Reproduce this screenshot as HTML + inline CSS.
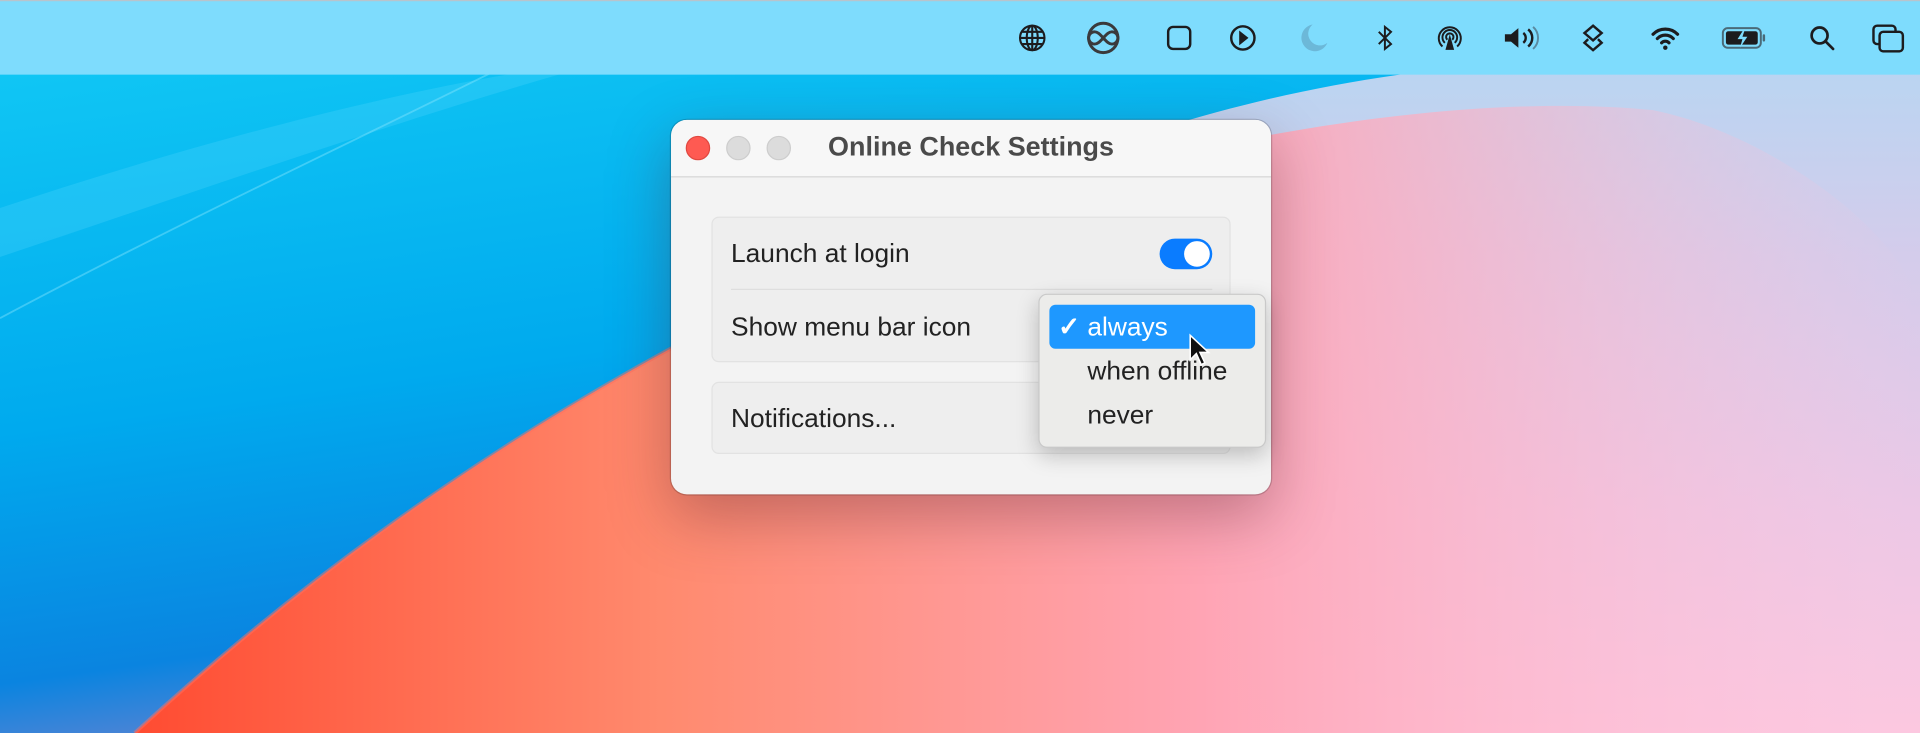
<!DOCTYPE html>
<html><head><meta charset="utf-8"><style>
html,body{margin:0;padding:0;width:1920px;height:733px;overflow:hidden;background:#fff}
#s{position:absolute;left:0;top:0;width:1568px;height:599px;transform:scale(1.22449,1.22371);transform-origin:0 0;overflow:hidden;font-family:"Liberation Sans",sans-serif}
.mb{position:absolute;left:0;top:0;width:1568px;height:60px;background:#7edcfd;border-top:1px solid #b8c4cc}
.ic{position:absolute;top:19px;width:24px;height:24px}
.win{position:absolute;left:548px;top:98px;width:490px;height:306px;border-radius:13px;background:#f3f3f3;box-shadow:0 18px 50px rgba(80,30,40,.35),0 0 0 1px rgba(0,0,0,.18);overflow:hidden}
.tb{position:absolute;left:0;top:0;width:490px;height:46px;background:#f7f7f7;border-bottom:1px solid #d6d6d6}
.tl{position:absolute;top:13px;width:18px;height:18px;border-radius:50%}
.title{position:absolute;left:0;width:490px;top:9px;text-align:center;font-weight:bold;font-size:22px;line-height:25px;color:#4a4a4a}
.grp{position:absolute;left:33px;width:422px;background:#eeeeee;border:1px solid #e2e2e2;border-radius:6px}
.lbl{position:absolute;left:15px;font-size:21.5px;line-height:25px;color:#222}
.menu{position:absolute;left:848px;top:240px;width:184px;height:124px;background:#ececea;border:1px solid #c9c9c9;border-radius:7px;box-shadow:0 6px 18px rgba(0,0,0,.22)}
.it{position:absolute;left:39px;font-size:21.5px;line-height:25px;color:#222}
</style></head><body><div id="s">
<svg width="1568" height="599" style="position:absolute;left:0;top:0">
<defs>
<linearGradient id="bg" x1="0" y1="0" x2="0" y2="1"><stop offset="0" stop-color="#b0d8f4"/><stop offset=".35" stop-color="#d4cceb"/><stop offset=".7" stop-color="#ecc8e6"/><stop offset="1" stop-color="#fcc8e0"/></linearGradient>
<linearGradient id="co" x1="0" y1="0" x2="1" y2="0"><stop offset="0" stop-color="#ff4a30"/><stop offset=".3" stop-color="#ff8a6e"/><stop offset=".6" stop-color="#ffa4b4"/><stop offset="1" stop-color="#ffc4dc" stop-opacity="0"/></linearGradient>
<linearGradient id="cov" x1="0" y1="0" x2="0" y2="1"><stop offset="0" stop-color="#fff" stop-opacity="0"/><stop offset="1" stop-color="#fff" stop-opacity="1"/></linearGradient>
<mask id="m"><rect width="1568" height="599" fill="url(#cov)"/></mask>
<linearGradient id="bl" x1="0" y1="0" x2="0.3" y2="1"><stop offset="0" stop-color="#10c6f4"/><stop offset=".5" stop-color="#00aaee"/><stop offset=".85" stop-color="#0a84e0"/><stop offset="1" stop-color="#6c84d0"/></linearGradient>
</defs>
<rect width="1568" height="599" fill="url(#bg)"/>
<path d="M100 599 C300 360 600 220 900 140 C1100 90 1250 80 1350 90 C1450 110 1568 200 1568 260 L1568 599 Z" fill="url(#co)"/>
<path d="M0 60 L1150 60 C1000 80 850 130 700 210 C450 320 250 470 110 599 L0 599 Z" fill="url(#bl)"/>
<path d="M0 170 C150 120 300 80 420 60 L460 60 C320 100 150 160 0 210 Z" fill="#4ed4fb" opacity=".3"/>
<path d="M0 260 C150 180 300 110 400 60" stroke="#8ee8ff" stroke-width="1.5" fill="none" opacity=".4"/>
<path d="M110 599 C250 470 450 320 700 210" stroke="#ff7060" stroke-width="3" fill="none" opacity=".5"/>
</svg>
<div class="mb"></div>
<svg class="ic" style="left:831px" viewBox="0 0 24 24" fill="none" stroke="#1c1c1e" stroke-width="1.7"><circle cx="12" cy="12" r="10"/><ellipse cx="12" cy="12" rx="4.5" ry="10"/><path d="M2 12h20M4 7h16M4 17h16M12 2v20"/></svg>
<svg class="ic" style="left:885px;width:32px;top:17px;height:28px" viewBox="0 0 32 28" fill="none" stroke="#3a3a3c" stroke-width="2.4"><circle cx="16" cy="14" r="12"/><path d="M9 19a5 5 0 0 1 0-10c3 0 5 3 7 5s4 5 7 5a5 5 0 0 0 0-10c-3 0-5 3-7 5s-4 5-7 5z"/></svg>
<svg class="ic" style="left:951px" viewBox="0 0 24 24" fill="none" stroke="#1c1c1e" stroke-width="2"><rect x="3" y="3" width="18" height="18" rx="4"/></svg>
<svg class="ic" style="left:1003px" viewBox="0 0 24 24" fill="none" stroke="#1c1c1e" stroke-width="2"><circle cx="12" cy="12" r="9.5"/><path d="M10 8l5 4-5 4z" fill="#1c1c1e"/></svg>
<svg class="ic" style="left:1061px" viewBox="0 0 24 24"><path d="M11 1a11 11 0 1 0 12 15A9 9 0 0 1 11 1z" fill="#6cb8d8"/></svg>
<svg class="ic" style="left:1119px" viewBox="0 0 24 24" fill="none" stroke="#1c1c1e" stroke-width="1.6"><path d="M7 7l10 10-5 4V3l5 4L7 17"/></svg>
<svg class="ic" style="left:1172px" viewBox="0 0 24 24" fill="none" stroke="#1c1c1e" stroke-width="1.6"><path d="M6 19A9 9 0 1 1 18 19M8 16a6 6 0 1 1 8 0M10 13.5a3 3 0 1 1 4 0"/><path d="M12 12l-2.5 9h5z" fill="#1c1c1e"/></svg>
<svg class="ic" style="left:1227px;width:32px" viewBox="0 0 32 24"><path d="M2 9h5l6-5v16l-6-5H2z" fill="#1c1c1e"/><path d="M17 8a5 5 0 0 1 0 8M21 5a9 9 0 0 1 0 14" stroke="#1c1c1e" stroke-width="2" fill="none"/><path d="M25 3a12 12 0 0 1 0 18" stroke="#5a8aa0" stroke-width="1.6" fill="none"/></svg>
<svg class="ic" style="left:1289px" viewBox="0 0 24 24" fill="none" stroke="#1c1c1e" stroke-width="2"><path d="M12 2l7 6-7 6-7-6z"/><path d="M8 13l-3 3 7 6 7-6-3-3"/></svg>
<svg class="ic" style="left:1348px" viewBox="0 0 24 24"><path d="M2 9a14 14 0 0 1 20 0M5.5 12.5a9 9 0 0 1 13 0M9 16a4 4 0 0 1 6 0" stroke="#1c1c1e" stroke-width="2.6" fill="none" stroke-linecap="round"/><circle cx="12" cy="20" r="1.8" fill="#1c1c1e"/></svg>
<svg class="ic" style="left:1405px;width:40px" viewBox="0 0 40 24"><rect x="2" y="4" width="31" height="16" rx="4" fill="none" stroke="#4a6a78" stroke-width="1.6"/><rect x="4.5" y="6.5" width="26" height="11" rx="2" fill="#1c1c1e"/><path d="M19 5l-5 8h4l-2 7 6-9h-4l2-6z" fill="#7edcfd"/><rect x="34.5" y="9" width="2" height="6" rx="1" fill="#4a6a78"/></svg>
<svg class="ic" style="left:1476px" viewBox="0 0 24 24" fill="none" stroke="#1c1c1e" stroke-width="2.2"><circle cx="10" cy="10" r="6.5"/><path d="M15 15l6 6" stroke-linecap="round"/></svg>
<svg class="ic" style="left:1528px;width:28px" viewBox="0 0 28 24" fill="none" stroke="#1c1c1e" stroke-width="2"><rect x="2" y="2" width="18" height="15" rx="3"/><rect x="7" y="7" width="19" height="16" rx="3" fill="#7edcfd"/></svg>

<div class="win">
<div class="tb">
<div class="tl" style="left:12px;background:#fe5a52;border:1px solid #e04840"></div>
<div class="tl" style="left:45px;background:#dcdcdc;border:1px solid #cdcdcd"></div>
<div class="tl" style="left:78px;background:#dcdcdc;border:1px solid #cdcdcd"></div>
<div class="title">Online Check Settings</div>
</div>
<div class="grp" style="top:79px;height:117px">
<div class="lbl" style="top:17px">Launch at login</div>
<div style="position:absolute;left:365px;top:17px;width:43px;height:25px;border-radius:13px;background:#0a7cff"></div>
<div style="position:absolute;left:385px;top:19px;width:21px;height:21px;border-radius:50%;background:#fff"></div>
<div style="position:absolute;left:15px;top:58px;width:393px;height:1px;background:#dedede"></div>
<div class="lbl" style="top:77px">Show menu bar icon</div>
</div>
<div class="grp" style="top:214px;height:57px">
<div class="lbl" style="top:17px">Notifications...</div>
</div>
</div>
<div class="menu">
<div style="position:absolute;left:8px;top:8px;width:168px;height:36px;border-radius:5px;background:#1e98ff"></div>
<div class="it" style="left:15px;top:14px;color:#fff;font-weight:bold">✓</div>
<div class="it" style="top:14px;color:#fff">always</div>
<div class="it" style="top:50px">when offline</div>
<div class="it" style="top:86px">never</div>
</div>
<svg style="position:absolute;left:970px;top:272px" width="20" height="30" viewBox="0 0 20 30"><path d="M2 2v20l5-5 4 9 3-1.5-4-8.5h7z" fill="#111" stroke="#fff" stroke-width="1.3"/></svg>
</div></body></html>
